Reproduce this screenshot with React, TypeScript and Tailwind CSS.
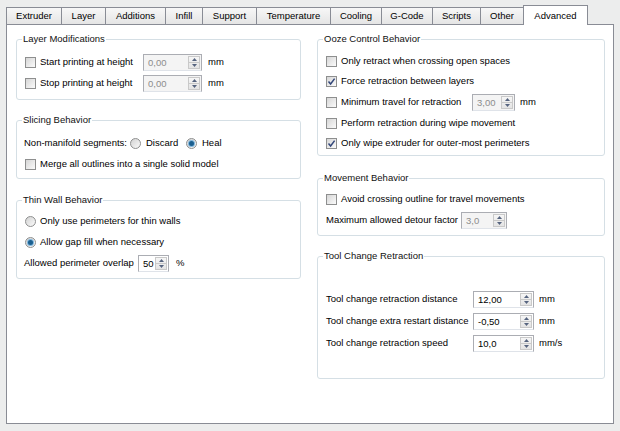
import React from 'react';

const tabs = [
  { label: 'Extruder', w: 'w-[56px]' },
  { label: 'Layer', w: 'w-[44px]' },
  { label: 'Additions', w: 'w-[60px]' },
  { label: 'Infill', w: 'w-[37px]' },
  { label: 'Support', w: 'w-[54px]' },
  { label: 'Temperature', w: 'w-[74px]' },
  { label: 'Cooling', w: 'w-[51px]' },
  { label: 'G-Code', w: 'w-[51px]' },
  { label: 'Scripts', w: 'w-[48px]' },
  { label: 'Other', w: 'w-[43px]' },
];

function Check({ checked }: { checked?: boolean }) {
  return (
    <span className="flex h-[11px] w-[11px] shrink-0 items-center justify-center border border-[#8e8f8f] bg-gradient-to-br from-[#d6d6d6] to-[#fbfbfb]">
      {checked && (
        <svg width="9" height="9" viewBox="0 0 9 9">
          <path d="M1.5 4.6 L3.6 7 L7.6 1.6" fill="none" stroke="#33477a" strokeWidth="1.5" />
        </svg>
      )}
    </span>
  );
}

function Radio({ checked }: { checked?: boolean }) {
  return (
    <span className="flex h-[11px] w-[11px] shrink-0 items-center justify-center rounded-full border border-[#8e8f8f] bg-gradient-to-br from-[#d2d2d2] to-[#fbfbfb]">
      {checked && (
        <span className="h-[5px] w-[5px] rounded-full bg-[#1b5f8f] shadow-[0_0_0_1px_#7fb6dc]" />
      )}
    </span>
  );
}

function Arrow({ up }: { up?: boolean }) {
  return (
    <svg width="5" height="3" viewBox="0 0 5 3">
      <path d={up ? 'M0 3 L2.5 0 L5 3 Z' : 'M0 0 L2.5 3 L5 0 Z'} fill="#56647f" />
    </svg>
  );
}

function Spin({ value, w, disabled }: { value: string; w: string; disabled?: boolean }) {
  return (
    <div
      className={`flex h-[17px] shrink-0 items-stretch border border-[#abadb3] border-b-[#dfe3e9] ${w} ${
        disabled ? 'bg-[#f4f4f4] text-[#8c8c8c]' : 'bg-white text-black'
      }`}
    >
      <span className="flex-1 pl-[4px] leading-[15px]">{value}</span>
      <span className="my-[1px] mr-[1px] flex w-[12px] flex-col border border-[#c9c9c9] bg-gradient-to-b from-[#f6f6f6] to-[#e4e4e4]">
        <span className="flex flex-1 items-center justify-center border-b border-[#c9c9c9]">
          <Arrow up />
        </span>
        <span className="flex flex-1 items-center justify-center">
          <Arrow />
        </span>
      </span>
    </div>
  );
}

function Group({ title, className, children }: { title: string; className: string; children: React.ReactNode }) {
  return (
    <fieldset className={`rounded-[3px] border border-[#d5dfe5] pl-[8px] ${className}`}>
      <legend className="ml-[-3px] px-[1px] leading-[12px] text-[#111]">{title}</legend>
      {children}
    </fieldset>
  );
}

export default function App() {
  return (
    <div className="h-[431px] w-[620px] overflow-hidden bg-[#eceded] font-['Liberation_Sans',Arial,sans-serif] text-[9.5px] text-black">
      <div className="flex h-[24px] items-end pl-[6px] pt-[5px]">
        {tabs.map((t, i) => (
          <div
            key={t.label}
            className={`flex h-[17px] items-center justify-center border-t border-r border-[#898c95] bg-gradient-to-b from-[#f7f7f7] to-[#e5e5e5] ${t.w} ${
              i === 0 ? 'border-l' : ''
            }`}
          >
            {t.label}
          </div>
        ))}
        <div className="relative z-10 -mb-[1px] ml-[-1px] flex h-[20px] w-[65px] items-start justify-center border-x border-t border-[#898c95] bg-white pt-[3px]">
          Advanced
        </div>
      </div>

      <div className="mx-[6px] flex h-[400px] w-[608px] gap-[16px] border border-[#898c95] bg-white pl-[9px] pr-[8px] pt-[8px]">
        <div className="flex w-[285px] flex-col">
          <Group title="Layer Modifications" className="pt-[7px] pb-[5px]">
            <div className="flex h-[21px] items-center">
              <Check />
              <span className="ml-[4px] w-[103px]">Start printing at height</span>
              <Spin value="0,00" w="w-[59px]" disabled />
              <span className="ml-[6px]">mm</span>
            </div>
            <div className="flex h-[21px] items-center">
              <Check />
              <span className="ml-[4px] w-[103px]">Stop printing at height</span>
              <Spin value="0,00" w="w-[59px]" disabled />
              <span className="ml-[6px]">mm</span>
            </div>
          </Group>

          <Group title="Slicing Behavior" className="mt-[14px] pt-[7px] pb-[3px]">
            <div className="flex h-[21px] items-center">
              <span className="ml-[-1px] w-[106px]">Non-manifold segments:</span>
              <Radio />
              <span className="ml-[5px] w-[40px]">Discard</span>
              <Radio checked />
              <span className="ml-[5px]">Heal</span>
            </div>
            <div className="flex h-[21px] items-center">
              <Check />
              <span className="ml-[4px]">Merge all outlines into a single solid model</span>
            </div>
          </Group>

          <Group title="Thin Wall Behavior" className="mt-[15px] pt-[5px] pb-[4px]">
            <div className="flex h-[21px] items-center">
              <Radio />
              <span className="ml-[4px]">Only use perimeters for thin walls</span>
            </div>
            <div className="flex h-[21px] items-center">
              <Radio checked />
              <span className="ml-[4px]">Allow gap fill when necessary</span>
            </div>
            <div className="flex h-[21px] items-center">
              <span className="ml-[-1px] w-[114px]">Allowed perimeter overlap</span>
              <Spin value="50" w="w-[31px]" />
              <span className="ml-[7px]">%</span>
            </div>
          </Group>
        </div>

        <div className="flex w-[288px] flex-col">
          <Group title="Ooze Control Behavior" className="pt-[6px] pb-[2px]">
            <div className="flex h-[20px] items-center">
              <Check />
              <span className="ml-[4px]">Only retract when crossing open spaces</span>
            </div>
            <div className="flex h-[20px] items-center">
              <Check checked />
              <span className="ml-[4px]">Force retraction between layers</span>
            </div>
            <div className="flex h-[22px] items-center">
              <Check />
              <span className="ml-[4px] w-[131px]">Minimum travel for retraction</span>
              <Spin value="3,00" w="w-[43px]" disabled />
              <span className="ml-[5px]">mm</span>
            </div>
            <div className="flex h-[20px] items-center">
              <Check />
              <span className="ml-[4px]">Perform retraction during wipe movement</span>
            </div>
            <div className="flex h-[20px] items-center">
              <Check checked />
              <span className="ml-[4px]">Only wipe extruder for outer-most perimeters</span>
            </div>
          </Group>

          <Group title="Movement Behavior" className="mt-[16px] pt-[5px] pb-[4px]">
            <div className="flex h-[21px] items-center">
              <Check />
              <span className="ml-[4px]">Avoid crossing outline for travel movements</span>
            </div>
            <div className="flex h-[21px] items-center">
              <span className="w-[135px]">Maximum allowed detour factor</span>
              <Spin value="3,0" w="w-[46px]" disabled />
            </div>
          </Group>

          <Group title="Tool Change Retraction" className="mt-[14px] pt-[26px] pb-[24px]">
            <div className="flex h-[22px] items-center">
              <span className="w-[147px]">Tool change retraction distance</span>
              <Spin value="12,00" w="w-[61px]" />
              <span className="ml-[5px]">mm</span>
            </div>
            <div className="flex h-[22px] items-center">
              <span className="w-[147px]">Tool change extra restart distance</span>
              <Spin value="-0,50" w="w-[61px]" />
              <span className="ml-[5px]">mm</span>
            </div>
            <div className="flex h-[22px] items-center">
              <span className="w-[147px]">Tool change retraction speed</span>
              <Spin value="10,0" w="w-[61px]" />
              <span className="ml-[5px]">mm/s</span>
            </div>
          </Group>
        </div>
      </div>
    </div>
  );
}
